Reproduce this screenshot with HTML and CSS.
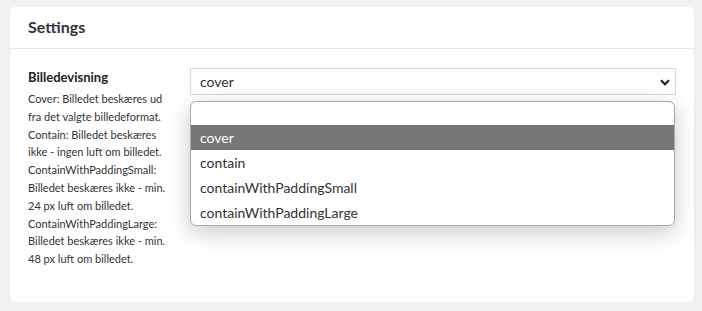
FILE: index.html
```html
<!DOCTYPE html>
<html lang="en">
<head>
    <meta charset="UTF-8">
    <meta name="viewport" content="width=device-width, initial-scale=1.0">
    <title>Settings</title>
    <link rel="stylesheet" href="styles.css">
</head>
<body>
    <div class="card">
        <div class="card-header">
            <h2>Settings</h2>
        </div>

        <div class="card-body">
            <div class="field-row">
                <div class="field-info">
                    <label class="field-label">Billedevisning</label>
                    <p class="field-help">
                        Cover: Billedet beskæres ud fra det valgte billedeformat.
                        Contain: Billedet beskæres ikke - ingen luft om billedet.
                        ContainWithPaddingSmall: Billedet beskæres ikke - min. 24 px luft om billedet.
                        ContainWithPaddingLarge: Billedet beskæres ikke - min. 48 px luft om billedet.
                    </p>
                </div>

                <div class="select-wrap">
                    <div class="select-box">
                        <span>cover</span>
                        <svg class="chevron" width="10" height="7" viewBox="0 0 10 7">
                            <path d="M1 1.2 L5 5.2 L9 1.2" fill="none" stroke="#222" stroke-width="2.2"/>
                        </svg>
                    </div>

                    <!-- open option list -->
                    <ul class="select-list">
                        <li class="option empty"></li>
                        <li class="option selected">cover</li>
                        <li class="option">contain</li>
                        <li class="option">containWithPaddingSmall</li>
                        <li class="option">containWithPaddingLarge</li>
                    </ul>
                </div>
            </div>
        </div>
    </div>
</body>
</html>
```

FILE: styles.css
```css
* {
    box-sizing: border-box;
    margin: 0;
    padding: 0;
}

body {
    font-family: 'Lato', 'Liberation Sans', sans-serif;
    background-color: #f3f2f2;
    padding: 7px 8px 0 10px;
    color: #333;
}

.card {
    width: 684px;
    height: 295px;
    background-color: #fff;
    border-radius: 4px;
    box-shadow: 0 1px 2px rgba(0, 0, 0, 0.12);
}

.card-header {
    height: 42px;
    padding: 10px 18px 0;
    border-bottom: 1px solid #e8e8e8;
}

.card-header h2 {
    font-size: 16px;
    font-weight: bold;
    line-height: 20px;
    color: #333;
}

.card-body {
    padding: 19px 18px 0;
}

.field-row {
    display: grid;
    grid-template-columns: 144px 1fr;
    column-gap: 18px;
}

.field-label {
    display: block;
    font-size: 13px;
    font-weight: bold;
    line-height: 18px;
    margin-bottom: 4px;
    color: #222;
}

.field-help {
    font-size: 11px;
    line-height: 17.8px;
    color: #333;
}

.select-wrap {
    position: relative;
}

.select-box {
    display: flex;
    justify-content: space-between;
    align-items: center;
    height: 27px;
    padding: 0 5px 0 9px;
    border: 1px solid #d6d6d6;
    font-size: 14px;
    color: #333;
}

.chevron {
    margin-top: 1px;
}

.select-list {
    position: absolute;
    top: 33px;
    left: 0;
    width: 485px;
    list-style: none;
    background-color: #fff;
    border: 1px solid #a8a8a8;
    border-radius: 6px;
    overflow: hidden;
    box-shadow: 0 6px 22px rgba(0, 0, 0, 0.22);
}

.option {
    height: 25px;
    line-height: 25px;
    padding-left: 9px;
    font-size: 14px;
    color: #333;
}

.option.empty {
    height: 23px;
}

.option.selected {
    background-color: #767676;
    color: #fff;
}
```
